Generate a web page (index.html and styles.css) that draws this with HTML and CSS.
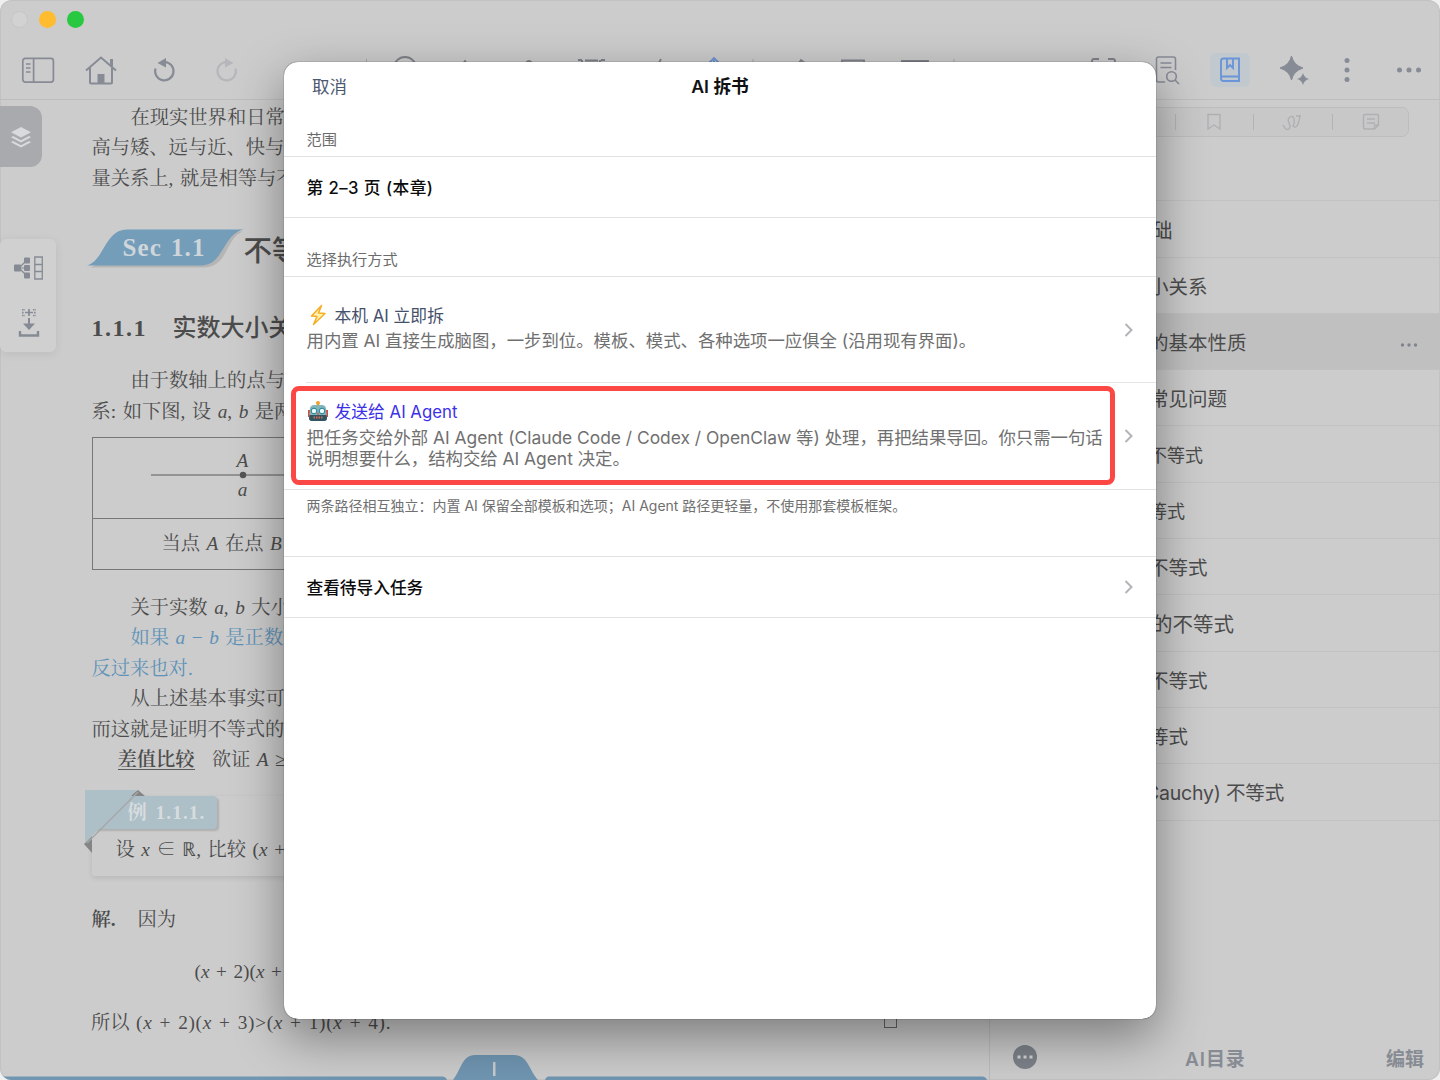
FILE: index.html
```html
<!DOCTYPE html>
<html lang="zh-CN">
<head>
  <meta charset="UTF-8">
  <meta name="viewport" content="width=device-width, initial-scale=1.0">
  <title>AI 拆书</title>
  <link rel="stylesheet" href="styles.css">
</head>
<body>
  <div class="window">
    <!-- Title bar -->
    <div class="titlebar">
      <span class="light light-off"></span>
      <span class="light light-yellow"></span>
      <span class="light light-green"></span>
    </div>

    <!-- Toolbar -->
    <div class="toolbar">
      <div class="tools-left">
        <svg width="34" height="28" viewBox="0 0 34 28" fill="none" stroke="#868b95" stroke-width="1.7"><rect x="1.8" y="2.3" width="30.6" height="23.8" rx="2.5"/><path d="M12.6 2.3v23.8"/><path d="M5 8h4.5M5 12h4.5M5 16h4.5" stroke-width="1.3"/></svg>
        <svg width="34" height="30" viewBox="0 0 34 30" fill="none" stroke="#868b95" stroke-width="2"><path d="M2 15.5 17 2.5l15 13"/><path d="M6 13v14.5q0 1 1 1h20q1 0 1-1V13"/><path d="M27.5 4v7" stroke-width="3"/><path d="M13.5 19h7v9h-7z" fill="#868b95" stroke="none"/></svg>
        <svg width="24" height="26" viewBox="0 0 24 26" fill="none" stroke="#868b95" stroke-width="2.2"><path d="M3.500 11.500A9.2 9.2 0 1 0 13 5"/><path d="M5.500 6 14 1v9.5z" fill="#868b95" stroke="none"/></svg>
        <svg width="24" height="26" viewBox="0 0 24 26" fill="none" stroke="#b5b7bb" stroke-width="2.2"><path d="M20.500 11.500A9.2 9.2 0 1 1 11 5"/><path d="M18.500 6 10 1v9.5z" fill="#b5b7bb" stroke="none"/></svg>
      </div>
      <svg class="tools-middle" width="840" height="30" viewBox="0 0 840 30" fill="none" stroke="#7e828a" stroke-width="1.8">
        <path d="M86.5 4v22M473 4v22M674 4v22" stroke="#aaacb0" stroke-width="1"/>
        <circle cx="125" cy="13" r="11"/>
        <path d="M182 10l3-4 3 4M245 10q4-8 8 0M298 5h4M302 5v8M305 5.500h13M321 5h4M320 5v8M378 10l3-6M519 8l2-3 5 4M562 5.500h22v18h-22z"/>
        <path d="M622 6h26v3h-26z" fill="#7e828a"/>
        <path d="M434 26V3M429 8l5-5 5 5" stroke="#6f95d0"/>
        <path d="M812 12V6q0-2 2-2h5M828 4h5q2 0 2 2v6"/>
      </svg>
      <div class="tools-right">
        <svg width="26" height="30" viewBox="0 0 26 30" fill="none" stroke="#868b95" stroke-width="1.6"><path d="M11 27H4.5q-2 0-2-2V4q0-2 2-2h15q2 0 2 2v11"/><path d="M6.5 8h11M6.5 12.500h11"/><circle cx="17.5" cy="21.5" r="4.8"/><path d="m21 25 4 4"/></svg>
        <span class="tool-active"><svg width="22" height="26" viewBox="0 0 22 26" fill="none" stroke="#6a95d8" stroke-width="1.9"><path d="M20 1.5v22.5H4.5Q2 24 2 21.5V4Q2 1.5 4.5 1.5zM2 19.500h18M8 1.5v9.5l3-3 3 3V1.5"/></svg></span>
        <svg class="sparkle" width="30" height="30" viewBox="0 0 30 30" fill="#868b95"><path d="M12.500 1Q14.500 10 24 13 14.500 16 12.500 25 10.500 16 1 13 10.500 10 12.500 1z" stroke="#868b95"/><path d="M24 18q1.300 5 6 6-4.700 1-6 6-1.300-5-6-6 4.700-1 6-6z"/></svg>
        <svg width="8" height="26" viewBox="0 0 8 26" fill="#868b95"><circle cx="4" cy="3.5" r="2.5"/><circle cx="4" cy="13" r="2.5"/><circle cx="4" cy="22.5" r="2.5"/></svg>
        <svg class="more" width="26" height="8" viewBox="0 0 26 8" fill="#868b95"><circle cx="3.5" cy="4" r="2.5"/><circle cx="13" cy="4" r="2.5"/><circle cx="22.5" cy="4" r="2.5"/></svg>
      </div>
    </div>

    <div class="main">
      <!-- Book page -->
      <div class="page">
        <div class="page-text">
          <p class="line indent">在现实世界和日常</p>
          <p class="line">高与矮、远与近、快与</p>
          <p class="line">量关系上, 就是相等与不</p>

          <div class="section">
            <div class="section-tag">
              <svg width="158" height="40" viewBox="0 0 158 40"><path d="M3 38.500c17-5 18-36 43-36l110 0c-18 6-14 36-40 36z" fill="#b5b5b5"/><path d="M0 36.500C17 32 18 .5 40 .5h117C136 4 137 36.500 114 36.500z" fill="#749dba"/></svg>
              <span class="section-number">Sec 1.1</span>
            </div>
            <h2>不等</h2>
          </div>

          <h3><span class="number">1.1.1</span>实数大小关</h3>

          <p class="line indent">由于数轴上的点与</p>
          <p class="line">系: 如下图, 设 <i>a</i>, <i>b</i> 是两</p>

          <div class="figure">
            <div class="axis">
              <i>A</i>
              <svg width="150" height="8" viewBox="0 0 150 8"><path d="M0 4h150" stroke="#5a5a5a" stroke-width="1.2"/><circle cx="92" cy="4" r="3.2" fill="#555"/></svg>
              <i>a</i>
            </div>
            <div class="caption">当点 <i>A</i> 在点 <i>B</i></div>
          </div>

          <p class="line indent">关于实数 <i>a</i>, <i>b</i> 大小</p>
          <p class="line indent blue">如果 <i>a</i> − <i>b</i> 是正数.</p>
          <p class="line blue">反过来也对.</p>
          <p class="line indent">从上述基本事实可</p>
          <p class="line">而这就是证明不等式的</p>
          <p class="line method"><b>差值比较</b>欲证 <i>A</i> ≥</p>

          <div class="example">
            <div class="example-tag">例 1.1.1.</div>
            <svg class="ribbon" width="62" height="64" viewBox="0 0 62 64"><path d="M46 6 54 0l7 6zM0 54l8-8v17z" fill="#858585"/><path d="M1 0h52L1 53z" fill="#adbfc7"/><path d="M54 2 3 53" stroke="#a4a6a8" stroke-width="1.5"/></svg>
            <p>设 <i>x</i> ∈ ℝ, 比较 (<i>x</i> +</p>
          </div>

          <p class="line solution"><b>解.</b>因为</p>
          <p class="line formula">(<i>x</i> + 2)(<i>x</i> +</p>
        </div>
        <div class="result">
          <span>所以 <span class="math">(<i>x</i> + 2)(<i>x</i> + 3)&gt;(<i>x</i> + 1)(<i>x</i> + 4).</span></span>
          <span class="qed"></span>
        </div>
        <svg class="page-tabs" width="989" height="26" viewBox="0 0 989 26" fill="#7096b2"><path d="M0 22.500h442q4 0 5 3.500H0zM453 26c8-10 9-25 22-25h39c14 0 15 15 24 25zM545 26q1-3.500 4-3.500h433q4 0 5 3.500z"/><path d="M493 8h2.5v14H493z" fill="#c6ccd0"/></svg>
      </div>

      <!-- Outline -->
      <div class="sidebar">
        <div class="segments">
          <span class="segment"></span>
          <span class="segment"><svg width="16" height="18" viewBox="0 0 16 18"><path d="M2 1.500h12v14.500l-6-4-6 4z"/></svg></span>
          <span class="segment"><svg width="20" height="18" viewBox="0 0 20 18"><path d="M1 12q3 6 6 4 2-2 0-6T8 4q3-2 4 2t-1 7q3 3 5-2T18 2M14 3h5"/></svg></span>
          <span class="segment"><svg width="18" height="18" viewBox="0 0 18 18"><path d="M3 1.500h12q1.500 0 1.500 1.500v9l-4 4H3q-1.500 0-1.500-1.500V3q0-1.500 1.500-1.500zM5 6h8M5 10h8M16.500 12h-4v4"/></svg></span>
        </div>
        <ul class="outline">
          <li></li>
          <li class="top">础</li>
          <li>小关系</li>
          <li class="selected">的基本性质<svg width="18" height="12" viewBox="0 0 18 12" fill="#7f848c"><circle cx="2.5" cy="9" r="1.7"/><circle cx="9" cy="9" r="1.7"/><circle cx="15.5" cy="9" r="1.7"/></svg></li>
          <li>常见问题</li>
          <li class="small">不等式</li>
          <li class="small">等式</li>
          <li>不等式</li>
          <li class="top">的不等式</li>
          <li>不等式</li>
          <li>等式</li>
          <li class="latin">Cauchy) 不等式</li>
        </ul>
        <div class="sidebar-footer">
          <svg width="26" height="26" viewBox="0 0 26 26"><circle cx="13" cy="13" r="12" fill="#7d828a"/><path d="M5.500 11.500h3v3h-3zM11.500 11.500h3v3h-3zM17.500 11.500h3v3h-3z" fill="#d4d4d4"/></svg>
          <span class="ai-outline">AI目录</span>
          <span>编辑</span>
        </div>
      </div>
    </div>

    <!-- Floating tools over the page -->
    <div class="layers-tab">
      <svg width="22" height="24" viewBox="0 0 22 24" fill="#d9dadb"><path d="M11 2 21 7.300 11 12.600 1 7.300z"/><path d="m3 11 8 4.200L19 11l2 1.200-10 5.300-10-5.300zM3 16l8 4.200L19 16l2 1.200-10 5.300-10-5.300z"/></svg>
    </div>
    <div class="side-tools">
      <svg width="30" height="24" viewBox="0 0 30 24" fill="#858a94"><rect x="0" y="8.5" width="7" height="7" rx="1"/><rect x="10" y="1.5" width="6" height="6" rx="1"/><rect x="10" y="9" width="6" height="6" rx="1"/><rect x="10" y="16.5" width="6" height="6" rx="1"/><path d="M6 12h4M6 11l6-6M6 13l6 6" stroke="#858a94" stroke-width="1.2"/><path d="M20.800 1h7.500v22h-7.500zM20.800 8.500h7.500M20.800 15.500h7.500" fill="none" stroke="#858a94" stroke-width="1.3"/></svg>
      <svg width="22" height="28" viewBox="0 0 22 28" fill="none" stroke="#858a94" stroke-width="2"><path d="M11 0v7M7 3.500h8" stroke-width="1.7"/><path d="M4 .8h3M15 .8h3M4 6.500h3M15 6.500h3M4 3.600h2M16 3.600h2" stroke-width="1.600" stroke-dasharray="1.600 .8"/><path d="M11 9v7"/><path d="M5 14.500h12l-6 6.500z" fill="#858a94" stroke="none"/><path d="M2 22v4.500h18V22" stroke-width="2.400"/></svg>
    </div>

    <!-- Dialog -->
    <div class="dialog">
      <div class="dialog-header">
        <span class="cancel">取消</span>
        <h1>AI 拆书</h1>
      </div>
      <div class="label label-range">范围</div>
      <div class="row row-plain row-pages">第 2–3 页 (本章)</div>
      <div class="label label-mode">选择执行方式</div>
      <div class="row row-option">
        <div class="option">
          <div class="option-title dark">
            <svg width="22" height="22" viewBox="0 0 22 22"><path d="M14.500 1.500 4.500 12l5.500.5L6.500 20.500 18 9.500l-6.500-.5z" fill="#fff3b0" stroke="#f7ad24" stroke-width="1.5" stroke-linejoin="round"/></svg>
            本机 AI 立即拆
          </div>
          <div class="option-text">用内置 AI 直接生成脑图，一步到位。模板、模式、各种选项一应俱全 (沿用现有界面)。</div>
        </div>
        <svg class="chevron" width="9" height="14" viewBox="0 0 9 14"><path d="m1.500 1 6 6-6 6"/></svg>
      </div>
      <div class="row row-option row-agent">
        <div class="option">
          <div class="option-title violet">
            <svg width="22" height="22" viewBox="0 0 22 22"><path d="M1 10h3v7H1zM18 10h3v7h-3z" fill="#d64b3a"/><path d="M10 3h2v4h-2z" fill="#777"/><circle cx="11" cy="3" r="2" fill="#f1a02c"/><path d="M3 8q1-3 4-3h8q3 0 4 3l1 10q0 3-3 3H5q-3 0-3-3z" fill="#7fb5bb"/><path d="M2.500 15h17l.5 3q0 3-3 3H5q-3 0-3-3z" fill="#31545e"/><circle cx="7" cy="11" r="2.8" fill="#e7fcff" stroke="#287e91"/><circle cx="15" cy="11" r="2.8" fill="#e7fcff" stroke="#287e91"/><path d="M9.800 14.500l1.200-2.500 1.200 2.500z" fill="#e34839"/><path d="M6.500 17.500h9" stroke="#d66b5a" stroke-width="1.8" stroke-dasharray="1.5 1"/></svg>
            发送给 AI Agent
          </div>
          <div class="option-text">把任务交给外部 AI Agent (Claude Code / Codex / OpenClaw 等) 处理，再把结果导回。你只需一句话<br>说明想要什么，结构交给 AI Agent 决定。</div>
        </div>
        <svg class="chevron" width="9" height="14" viewBox="0 0 9 14"><path d="m1.500 1 6 6-6 6"/></svg>
        <div class="highlight"></div>
      </div>
      <div class="note">两条路径相互独立：内置 AI 保留全部模板和选项；AI Agent 路径更轻量，不使用那套模板框架。</div>
      <div class="row row-plain">
        查看待导入任务
        <svg class="chevron" width="9" height="14" viewBox="0 0 9 14"><path d="m1.500 1 6 6-6 6"/></svg>
      </div>
    </div>
  </div>
</body>
</html>
```
FILE: styles.css
```css
/* General Styles */
* {
  box-sizing: border-box;
}

body {
  margin: 0;
  background: #eef0f0;
  font-family: Inter, "Noto Sans CJK SC", sans-serif;
  color: #4c4c4c;
}

h1, h2, h3, p, ul {
  margin: 0;
  padding: 0;
}

svg {
  display: block;
  flex: none;
}

.window {
  position: relative;
  display: flex;
  flex-direction: column;
  width: 1440px;
  height: 1080px;
  background: #cccccc;
  border-radius: 12px;
  box-shadow: inset 0 0 0 1px #c2c2c2;
  overflow: hidden;
}

/* Title bar */
.titlebar {
  display: flex;
  flex: none;
  gap: 11px;
  height: 40px;
  padding: 11px;
}

.light {
  width: 17px;
  height: 17px;
  border-radius: 50%;
}

.light-off {
  background: #d2d2d2;
  border: 1px solid #c5c5c5;
}

.light-yellow {
  background: #febc2e;
}

.light-green {
  background: #28c840;
}

/* Toolbar */
.toolbar {
  display: flex;
  flex: none;
  align-items: center;
  height: 60px;
  border-bottom: 1px solid #bebebe;
}

.tools-left {
  display: grid;
  grid-template-columns: repeat(4, 63px);
  justify-items: center;
  align-items: center;
  width: 275px;
  padding-left: 6px;
}

.tools-middle {
  margin-left: 5px;
}

.tools-right {
  display: flex;
  align-items: center;
  margin-left: 34px;
}

.tool-active {
  display: flex;
  justify-content: center;
  width: 40px;
  padding: 4px 0;
  margin: 0 29px 0 30px;
  background: #c1c8ce;
  border-radius: 6px;
}

.sparkle {
  margin-right: 34px;
}

.more {
  margin-left: 45px;
}

.main {
  display: flex;
  flex: 1;
}

/* Book page */
.page {
  display: flex;
  flex-direction: column;
  width: 989px;
  font-family: "Liberation Serif", "Noto Serif CJK SC", "Noto Sans CJK SC", serif;
  font-size: 19.3px;
  word-spacing: 1.7px;
}

.page-text {
  height: 895px;
  padding: 3px 0 0 91.5px;
  white-space: nowrap;
}

.line {
  height: 30.4px;
  line-height: 30.4px;
}

.indent {
  padding-left: 39px;
}

.blue {
  color: #5f92b8;
}

.section {
  display: flex;
  align-items: center;
  height: 37px;
  margin: 36px 0 0 -5px;
}

.section-tag {
  position: relative;
  width: 157px;
}

.section-number {
  position: absolute;
  left: 36px;
  top: 3px;
  font-size: 25px;
  line-height: 32px;
  letter-spacing: 1.1px;
  font-weight: bold;
  color: #cfd6da;
}

.section h2 {
  font-family: "Noto Sans CJK SC", sans-serif;
  font-size: 28.5px;
  line-height: 37px;
  font-weight: 500;
}

.page-text h3 {
  margin: 42px 0 21px;
  font-family: "Noto Sans CJK SC", sans-serif;
  font-size: 24px;
  line-height: 34px;
  font-weight: 500;
}

.page-text h3 .number {
  display: inline-block;
  width: 81px;
  font-family: "Liberation Serif", serif;
  font-weight: bold;
  letter-spacing: 1.5px;
}

.figure {
  width: 300px;
  height: 133px;
  margin: 10px 0 23px;
  border: 1px solid #777;
}

.axis {
  display: flex;
  flex-direction: column;
  gap: 2px;
  height: 81px;
  padding: 13px 0 0 58px;
  border-bottom: 1px solid #777;
  line-height: 20px;
}

.axis i {
  width: 184px;
  text-align: center;
}

.axis svg {
  margin: -2px 0 -1px;
}

.caption {
  padding-left: 69px;
  line-height: 50px;
}

.method {
  padding-left: 26px;
}

.method b {
  display: inline-block;
  height: 25px;
  line-height: 30px;
  margin-right: 17px;
  font-weight: 600;
  border-bottom: 1px solid #5a5a5a;
}

.example {
  position: relative;
  height: 80px;
  margin-top: 21px;
  padding-left: 24px;
  border-radius: 3px;
  box-shadow: 0 2px 5px rgba(0, 0, 0, 0.1);
}

.example-tag {
  width: 125px;
  height: 33px;
  margin-left: -24px;
  padding-left: 36px;
  line-height: 33px;
  font-weight: bold;
  letter-spacing: 1.1px;
  color: #d8dcde;
  background: #adbfc7;
  border-radius: 4px;
  box-shadow: 2px 2px 2px rgba(0, 0, 0, 0.14);
}

.ribbon {
  position: absolute;
  left: -8px;
  top: -6px;
}

.example p {
  line-height: 41px;
}

.solution {
  margin-top: 29px;
}

.solution b {
  display: inline-block;
  width: 46px;
  font-weight: 600;
}

.formula {
  margin-top: 21px;
  padding-left: 103px;
}

.result {
  display: flex;
  justify-content: space-between;
  height: 59px;
  padding: 13px 92px 0 91px;
  line-height: 30px;
}

.result .math {
  letter-spacing: 0.65px;
}

.qed {
  width: 13px;
  height: 13px;
  margin-top: 7px;
  border: 1px solid #666;
}

/* Outline */
.sidebar {
  display: flex;
  flex-direction: column;
  flex: 1;
  border-left: 1px solid #bcbcbc;
}

.segments {
  display: flex;
  justify-content: flex-end;
  width: 419px;
  height: 30px;
  margin-top: 7px;
  padding-right: 0;
  border: 1px solid #bdbdbd;
  border-radius: 7px;
  background: #c8c8c8;
}

.segment {
  position: relative;
  display: flex;
  align-items: center;
  justify-content: center;
  width: 78.5px;
}

.segment + .segment::before {
  content: "";
  position: absolute;
  left: 2px;
  top: 6px;
  height: 16px;
  border-left: 1px solid #b3b3b3;
}

.segment svg {
  margin-left: 4px;
}

.segment path {
  fill: none;
  stroke: #aeb0b3;
  stroke-width: 1.4;
}

.outline {
  margin-top: 8px;
  list-style: none;
}

.outline li {
  display: flex;
  align-items: center;
  justify-content: space-between;
  height: 56.3px;
  padding: 0 22px 0 159px;
  font-size: 19.5px;
  border-bottom: 1px solid #c2c2c2;
}

.outline .top {
  padding-left: 162px;
  font-size: 20.5px;
}

.outline .small {
  font-size: 18px;
}

.outline .latin {
  padding-left: 155px;
  letter-spacing: -0.2px;
}

.outline .selected {
  background: #c0c0c0;
}

.sidebar-footer {
  display: flex;
  align-items: center;
  height: 45px;
  margin-top: auto;
  padding: 0 16px 1px 22px;
  font-size: 19px;
  font-weight: 600;
  color: #878b93;
}

.ai-outline {
  margin: 0 auto 0 147px;
  letter-spacing: 0.9px;
}

/* Floating tools */
.layers-tab {
  position: absolute;
  left: 0;
  top: 106px;
  display: flex;
  align-items: center;
  justify-content: center;
  width: 42px;
  height: 61px;
  background: #a8aaae;
  border-radius: 0 12px 12px 0;
}

.side-tools {
  position: absolute;
  left: 0;
  top: 239px;
  display: flex;
  flex-direction: column;
  align-items: center;
  gap: 29px;
  width: 56px;
  height: 113px;
  padding: 17px 0 0 1px;
  background: #d0d0d0;
  border-radius: 6px;
  box-shadow: 0 2px 10px rgba(0, 0, 0, 0.08);
}

/* Dialog */
.dialog {
  position: absolute;
  left: 284px;
  top: 62px;
  width: 872px;
  height: 956.5px;
  background: #fff;
  border-radius: 14px;
  box-shadow: 0 0 1px rgba(0, 0, 0, 0.9), 0 18px 50px rgba(0, 0, 0, 0.4);
}

.dialog-header {
  display: grid;
  grid-template-columns: 1fr auto 1fr;
  align-items: center;
  height: 46px;
}

.dialog-header h1 {
  font-size: 17.7px;
  font-weight: 600;
  color: #111;
}

.cancel {
  padding-left: 28px;
  font-size: 17.5px;
  color: #4b5872;
}

.label {
  padding-left: 22.5px;
  font-size: 15.2px;
  line-height: 20px;
  color: #6b6b6b;
  border-bottom: 1px solid #e2e2e2;
}

.label-range {
  height: 49px;
  padding-top: 22px;
}

.label-mode {
  height: 59px;
  padding-top: 32px;
}

.row {
  position: relative;
  display: flex;
  align-items: center;
  justify-content: space-between;
  padding: 0 23px 0 22.5px;
  border-bottom: 1px solid #e2e2e2;
}

.row-plain {
  height: 61px;
  font-size: 16.7px;
  font-weight: 500;
  color: #0c0c0c;
}

.row-pages {
  letter-spacing: 0.45px;
}

.row-option {
  height: 106px;
  border-bottom: none;
}

.row-option .option {
  padding-bottom: 6px;
}

.row-agent {
  height: 107px;
  border-bottom: 1px solid #e2e2e2;
}

.row-agent .option {
  padding-bottom: 4px;
}

/* inset separator between the two options */
.row-agent::before {
  content: "";
  position: absolute;
  left: 22px;
  right: 0;
  top: -1px;
  border-top: 1px solid #e6e6e6;
}

.option-title {
  display: flex;
  align-items: center;
  gap: 6px;
  height: 28px;
  padding-bottom: 3px;
  font-size: 16.8px;
}

.dark {
  color: #45516b;
}

.violet {
  color: #3c30e8;
}

.option-text {
  font-size: 17.4px;
  line-height: 21.5px;
  letter-spacing: -0.01px;
  color: #707070;
  white-space: nowrap;
}

.chevron path {
  fill: none;
  stroke: #b4b4b8;
  stroke-width: 2;
}

/* red frame around the agent option */
.highlight {
  position: absolute;
  left: 7px;
  top: 3px;
  width: 824px;
  height: 99px;
  border: 5.5px solid #fb4844;
  border-radius: 8px;
}

.note {
  height: 67px;
  padding: 6px 0 0 22.5px;
  font-size: 14px;
  line-height: 20px;
  color: #707070;
  border-bottom: 1px solid #e2e2e2;
}
```
